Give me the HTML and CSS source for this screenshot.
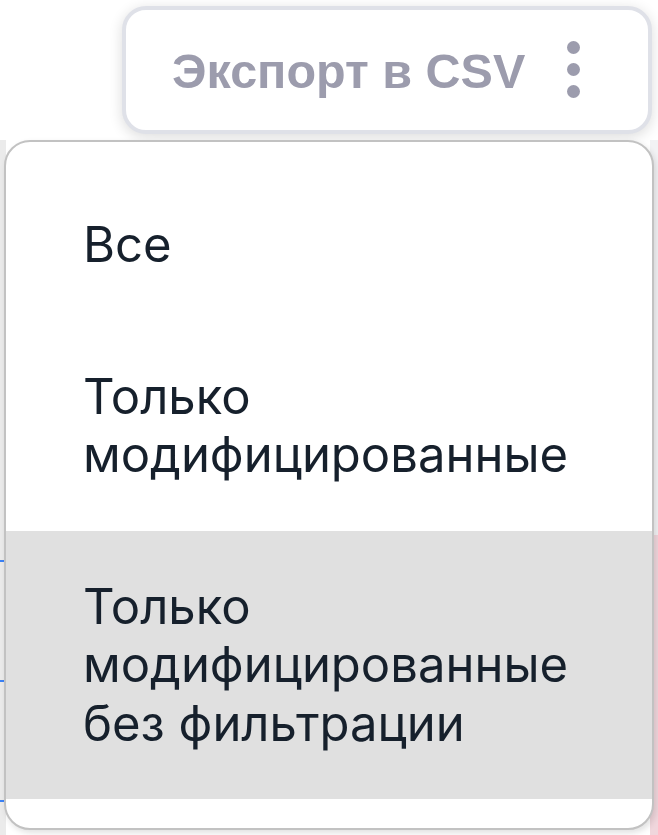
FILE: index.html
```html
<!DOCTYPE html>
<html lang="ru">
<head>
<meta charset="utf-8">
<link rel="stylesheet" href="styles.css">
</head>
<body>
<div class="page">
  <div class="bg-table">
    <div class="bg-left">
      <span class="tick t1"></span><span class="tick t2"></span><span class="tick t3"></span>
    </div>
    <div class="bg-mid"></div>
    <div class="bg-right">
      <div class="bg-right-top"></div>
      <div class="bg-right-pink"></div>
    </div>
  </div>

  <div class="export-btn">
    <span class="export-label">Экспорт в CSV</span>
    <span class="kebab"><i></i><i></i><i></i></span>
  </div>

  <div class="menu">
    <div class="menu-item">Все</div>
    <div class="menu-item">Только модифицированные</div>
    <div class="menu-item active">Только модифицированные без фильтрации</div>
  </div>
</div>
</body>
</html>
```
FILE: styles.css
```css
* { box-sizing: border-box; }
html, body { margin: 0; padding: 0; }
body {
  width: 658px;
  height: 835px;
  overflow: hidden;
  background: #ffffff;
  font-family: Inter, "Noto Sans", sans-serif;
}
.page {
  position: relative;
  width: 658px;
  height: 835px;
}
.bg-table {
  display: flex;
  height: 835px;
  padding-top: 140px;
}
.bg-left {
  position: relative;
  width: 6px;
  background: #ebebeb;
}
.tick { position: absolute; left: 0; width: 4px; height: 2px; background: #3b82f6; }
.t1 { top: 420px; }
.t2 { top: 540px; }
.t3 { top: 660px; }
.bg-mid { flex: 1; }
.bg-right {
  width: 8px;
  display: flex;
  flex-direction: column;
}
.bg-right-top { height: 395px; background: #f2f2f4; }
.bg-right-pink { flex: 1; background: #f0d6dc; }

.export-btn {
  position: absolute;
  left: 122px;
  top: 6px;
  width: 530px;
  height: 128px;
  border: 4px solid #dfe1e8;
  border-radius: 24px;
  background: #ffffff;
  box-shadow: 0 3px 14px rgba(0, 0, 0, 0.14);
  display: flex;
  align-items: center;
  padding-left: 46px;
  gap: 42px;
}
.export-label {
  font-family: "Liberation Sans", Arial, sans-serif;
  font-weight: 700;
  font-size: 48.5px;
  line-height: 1;
  margin-top: 2px;
  color: #9c9cad;
}
.kebab {
  display: flex;
  flex-direction: column;
  gap: 9px;
  margin-top: -2px;
}
.kebab i {
  display: block;
  width: 13px;
  height: 13px;
  border-radius: 50%;
  background: #9c9cad;
}

.menu {
  position: absolute;
  left: 4px;
  top: 140px;
  width: 650px;
  height: 690px;
  border: 2px solid #c2c2c2;
  border-radius: 26px;
  background: #ffffff;
  box-shadow: 2px 3px 6px rgba(0, 0, 0, 0.12);
  padding: 27px 0 32px;
  overflow: hidden;
}
.menu-item {
  padding: 47px 60px 46px 77px;
  font-size: 49px;
  line-height: 58.5px;
  color: #16202c;
}
.menu-item.active {
  background: #e0e0e0;
}
```
